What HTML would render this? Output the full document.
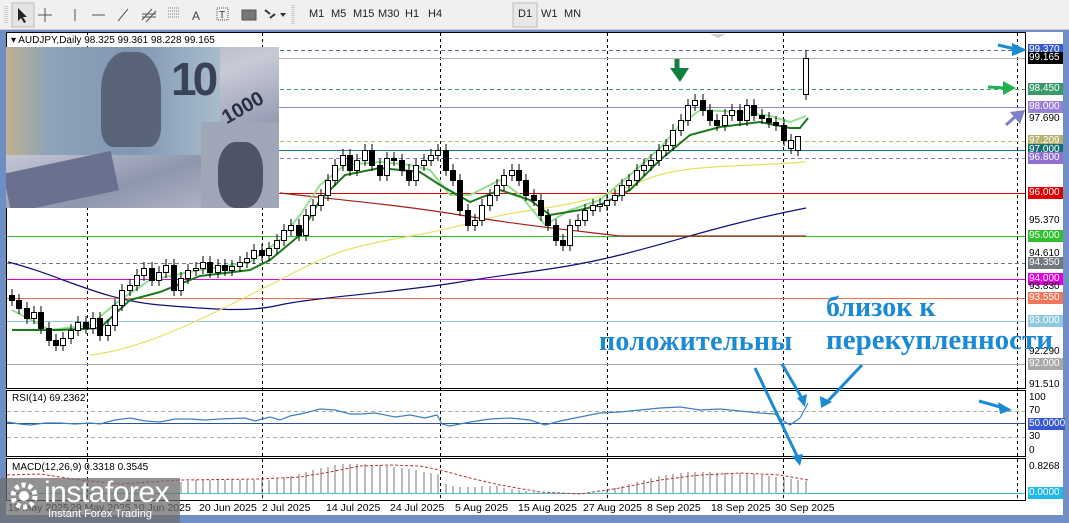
<!DOCTYPE html>
<html><head><meta charset="utf-8"><style>
*{margin:0;padding:0;box-sizing:border-box}
body{width:1069px;height:523px;overflow:hidden;background:#6f8fc4;font-family:"Liberation Sans",sans-serif;position:relative}
.tb{position:absolute;left:0;top:0;width:1069px;height:30px;background:#f0f0f0;border-bottom:1px solid #c8c8c8}
.tb span{position:absolute;top:8px;font-size:11px;color:#222}
.lbl{position:absolute;left:1028px;width:35px;height:12px;font-size:10px;line-height:12px;color:#fff;padding-left:1px}
.ax{position:absolute;left:1029px;font-size:10px;color:#000;line-height:12px}
.dt{position:absolute;top:502px;font-size:10.5px;color:#000}
.ru{position:absolute;font-family:"Liberation Serif",serif;font-weight:bold;color:#1a8ad4;font-size:28px;white-space:nowrap}
</style></head><body>
<div class="tb">
<svg width="600" height="30" style="position:absolute;left:0;top:0">
<path d="M5 6V24M7 6V24" stroke="#aaa" stroke-dasharray="1 1"/>
<rect x="12" y="3" width="22" height="24" fill="#e4e4e4" stroke="#bbb"/>
<path d="M18 8L18 21L21 18L24 23L26 22L23 17L27 17Z" fill="#222"/>
<path d="M45 8V22M38 15H52" stroke="#555"/>
<path d="M75 9V21" stroke="#555"/>
<path d="M92 15H105" stroke="#555"/>
<path d="M118 21L128 9" stroke="#555"/>
<path d="M142 20L152 9M146 22L156 11M142 14H156M142 17H156" stroke="#555"/>
<path d="M168 8H180M168 11H180M168 14H180M168 17H180" stroke="#777" stroke-dasharray="1 1"/>
<text x="192" y="20" font-size="12" fill="#444">A</text>
<rect x="217" y="8" width="11" height="12" fill="none" stroke="#555" stroke-dasharray="1 1"/><text x="219" y="18" font-size="10" fill="#333">T</text>
<rect x="242" y="10" width="14" height="10" fill="#777" stroke="#555"/>
<path d="M265 10L270 14M270 18L275 14" stroke="#333" stroke-width="2"/><path d="M280 13L286 13L283 17Z" fill="#333"/>
<path d="M292 5V25M294 5V25" stroke="#aaa" stroke-dasharray="1 1"/>
<rect x="513" y="3" width="24" height="24" fill="#e8e8e8" stroke="#bbb"/>
</svg>
<span style="left:309px">M1</span><span style="left:331px">M5</span><span style="left:353px">M15</span><span style="left:378px">M30</span><span style="left:405px">H1</span><span style="left:428px">H4</span><span style="left:518px">D1</span><span style="left:541px">W1</span><span style="left:564px">MN</span>
</div>
<div style="position:absolute;left:6px;top:32px;width:1057px;height:483px;background:#fff"></div>
<svg width="1069" height="523" style="position:absolute;left:0;top:0">
<rect x="6.5" y="32.5" width="1019" height="356" fill="none" stroke="#000"/>
<rect x="6.5" y="390.5" width="1019" height="66" fill="none" stroke="#000"/>
<rect x="6.5" y="458.5" width="1019" height="42" fill="none" stroke="#000"/>
<g stroke="#000" stroke-dasharray="3 3">
<path d="M87.5 33V500M262.5 33V500M440.5 33V500M607.5 33V500M783.5 33V500M1017.5 33V500"/>
</g>
<g stroke-width="1">
<path d="M7 50.5H1025" stroke="#5a6a90" stroke-dasharray="4 3"/>
<path d="M7 58.5H1025" stroke="#b8b0a8"/>
<path d="M7 89.5H1025" stroke="#3a9a6a" stroke-dasharray="4 3"/>
<path d="M7 107.5H1025" stroke="#9a80d0"/>
<path d="M7 141.5H1025" stroke="#c0b870" stroke-dasharray="4 3"/>
<path d="M7 150.5H1025" stroke="#1a7878"/>
<path d="M7 158.5H1025" stroke="#9070d0" stroke-dasharray="4 3"/>
<path d="M7 193.5H1025" stroke="#e00000"/>
<path d="M7 236.5H1025" stroke="#30c030"/>
<path d="M7 263.5H1025" stroke="#707880" stroke-dasharray="4 3"/>
<path d="M7 279.5H1025" stroke="#e000e0"/>
<path d="M7 298.5H1025" stroke="#f07050"/>
<path d="M7 321.5H1025" stroke="#90c8e0"/>
<path d="M7 364.5H1025" stroke="#a8a8a8"/>
</g>
<path d="M8 262C60 275 100 300 160 305S250 312 280 305S400 292 460 282S560 270 620 255S720 225 806 208" fill="none" stroke="#10107a" stroke-width="1.2"/>
<path d="M90 355C140 350 200 320 260 290S330 250 400 238S480 218 520 212S600 200 640 182S720 168 806 162" fill="none" stroke="#e8e060" stroke-width="1.2"/>
<path d="M280 193C340 200 400 205 460 215S570 230 620 236H806" fill="none" stroke="#a02020" stroke-width="1.2"/>
<path d="M12 310L50 330L90 325L120 300L150 280L200 270L250 262L280 240L300 215L320 185L345 165L380 162L410 165L430 170L450 195L470 195L500 180L520 195L545 225L570 210L600 200L630 175L660 148L680 125L700 110L740 112L770 116L790 122L806 116" fill="none" stroke="#90e090" stroke-width="2"/>
<path d="M12 330L60 330L100 328L130 300L160 292L200 276L250 270L270 260L300 235L320 200L345 175L380 168L420 172L440 185L470 202L500 190L530 200L550 215L580 210L600 205L630 190L660 160L690 135L720 127L760 122L790 128L800 128L808 118" fill="none" stroke="#1a7a1a" stroke-width="2"/>
<path stroke="#000" d="M12 289V306M19 294V314M27 302V324M34 306V324M41 306V334M49 322V346M56 334V351M63 332V351M71 324V344M78 316V336M86 316V334M93 312V334M100 312V341M108 319V341M115 299V331M122 284V311M130 279V296M137 269V291M144 262V281M152 262V286M159 266V286M166 259V278M174 259V296M181 272V296M188 264V284M196 262V276M203 256V274M210 256V278M218 259V278M225 259V276M232 260V276M240 256V272M247 252V268M254 244V264M262 244V261M269 242V261M277 234V254M284 224V246M291 219V236M299 219V241M306 209V241M313 199V221M321 189V211M328 174V201M335 159V186M343 149V171M350 149V176M357 154V176M365 144V166M372 144V171M380 159V181M387 152V181M394 152V166M402 154V176M409 164V186M416 159V186M424 154V171M431 149V166M438 144V161M446 144V176M453 164V186M460 174V216M468 204V231M475 214V231M482 199V226M490 189V211M497 179V201M504 169V191M512 164V181M519 164V186M526 174V201M534 189V206M541 194V221M548 209V231M556 219V246M563 234V251M570 219V251M578 214V231M585 204V226M593 199V216M600 198V212M607 194V211M615 189V206M622 179V201M629 174V191M637 164V186M644 159V176M651 154V171M659 144V166M666 139V156M673 124V151M681 114V136M688 99V126M695 94V111M703 94V116M710 104V126M717 114V131M725 109V131M732 104V121M740 104V126M747 99V126M754 99V121M762 109V124M769 112V128M776 116V131M784 119V146M791 134V154M798 139V156M806 50V100"/>
<g stroke="#000" stroke-width="1">
<rect x="9.5" y="295.5" width="5" height="5"/><rect x="16.5" y="300.5" width="5" height="8"/><rect x="24.5" y="308.5" width="5" height="10"/><rect x="31.5" y="312.5" width="5" height="6" fill="#fff"/><rect x="38.5" y="312.5" width="5" height="16"/><rect x="46.5" y="328.5" width="5" height="12"/><rect x="53.5" y="340.5" width="5" height="5"/><rect x="60.5" y="338.5" width="5" height="7" fill="#fff"/><rect x="68.5" y="330.5" width="5" height="8" fill="#fff"/><rect x="75.5" y="322.5" width="5" height="8" fill="#fff"/>
<rect x="83.5" y="322.5" width="5" height="6"/><rect x="90.5" y="318.5" width="5" height="10" fill="#fff"/><rect x="97.5" y="318.5" width="5" height="17"/><rect x="105.5" y="325.5" width="5" height="10" fill="#fff"/><rect x="112.5" y="305.5" width="5" height="20" fill="#fff"/><rect x="119.5" y="290.5" width="5" height="15" fill="#fff"/><rect x="127.5" y="285.5" width="5" height="5" fill="#fff"/><rect x="134.5" y="275.5" width="5" height="10" fill="#fff"/><rect x="141.5" y="268.5" width="5" height="7" fill="#fff"/><rect x="149.5" y="268.5" width="5" height="12"/>
<rect x="156.5" y="272.5" width="5" height="8" fill="#fff"/><rect x="163.5" y="265.5" width="5" height="7" fill="#fff"/><rect x="171.5" y="265.5" width="5" height="25"/><rect x="178.5" y="278.5" width="5" height="12" fill="#fff"/><rect x="185.5" y="270.5" width="5" height="8" fill="#fff"/><rect x="193.5" y="268.5" width="5" height="2" fill="#fff"/><rect x="200.5" y="262.5" width="5" height="6" fill="#fff"/><rect x="207.5" y="262.5" width="5" height="10"/><rect x="215.5" y="265.5" width="5" height="7" fill="#fff"/><rect x="222.5" y="265.5" width="5" height="5"/>
<rect x="229.5" y="266.5" width="5" height="4" fill="#fff"/><rect x="237.5" y="262.5" width="5" height="4" fill="#fff"/><rect x="244.5" y="258.5" width="5" height="4" fill="#fff"/><rect x="251.5" y="250.5" width="5" height="8" fill="#fff"/><rect x="259.5" y="250.5" width="5" height="5"/><rect x="266.5" y="248.5" width="5" height="7" fill="#fff"/><rect x="274.5" y="240.5" width="5" height="8" fill="#fff"/><rect x="281.5" y="230.5" width="5" height="10" fill="#fff"/><rect x="288.5" y="225.5" width="5" height="5" fill="#fff"/><rect x="296.5" y="225.5" width="5" height="10"/>
<rect x="303.5" y="215.5" width="5" height="20" fill="#fff"/><rect x="310.5" y="205.5" width="5" height="10" fill="#fff"/><rect x="318.5" y="195.5" width="5" height="10" fill="#fff"/><rect x="325.5" y="180.5" width="5" height="15" fill="#fff"/><rect x="332.5" y="165.5" width="5" height="15" fill="#fff"/><rect x="340.5" y="155.5" width="5" height="10" fill="#fff"/><rect x="347.5" y="155.5" width="5" height="15"/><rect x="354.5" y="160.5" width="5" height="10" fill="#fff"/><rect x="362.5" y="150.5" width="5" height="10" fill="#fff"/><rect x="369.5" y="150.5" width="5" height="15"/>
<rect x="377.5" y="165.5" width="5" height="10"/><rect x="384.5" y="158.5" width="5" height="17" fill="#fff"/><rect x="391.5" y="158.5" width="5" height="2"/><rect x="399.5" y="160.5" width="5" height="10"/><rect x="406.5" y="170.5" width="5" height="10"/><rect x="413.5" y="165.5" width="5" height="15" fill="#fff"/><rect x="421.5" y="160.5" width="5" height="5" fill="#fff"/><rect x="428.5" y="155.5" width="5" height="5" fill="#fff"/><rect x="435.5" y="150.5" width="5" height="5" fill="#fff"/><rect x="443.5" y="150.5" width="5" height="20"/>
<rect x="450.5" y="170.5" width="5" height="10"/><rect x="457.5" y="180.5" width="5" height="30"/><rect x="465.5" y="210.5" width="5" height="15"/><rect x="472.5" y="220.5" width="5" height="5" fill="#fff"/><rect x="479.5" y="205.5" width="5" height="15" fill="#fff"/><rect x="487.5" y="195.5" width="5" height="10" fill="#fff"/><rect x="494.5" y="185.5" width="5" height="10" fill="#fff"/><rect x="501.5" y="175.5" width="5" height="10" fill="#fff"/><rect x="509.5" y="170.5" width="5" height="5" fill="#fff"/><rect x="516.5" y="170.5" width="5" height="10"/>
<rect x="523.5" y="180.5" width="5" height="15"/><rect x="531.5" y="195.5" width="5" height="5"/><rect x="538.5" y="200.5" width="5" height="15"/><rect x="545.5" y="215.5" width="5" height="10"/><rect x="553.5" y="225.5" width="5" height="15"/><rect x="560.5" y="240.5" width="5" height="5"/><rect x="567.5" y="225.5" width="5" height="20" fill="#fff"/><rect x="575.5" y="220.5" width="5" height="5" fill="#fff"/><rect x="582.5" y="210.5" width="5" height="10" fill="#fff"/><rect x="590.5" y="205.5" width="5" height="5" fill="#fff"/>
<rect x="597.5" y="204.5" width="5" height="2" fill="#fff"/><rect x="604.5" y="200.5" width="5" height="5" fill="#fff"/><rect x="612.5" y="195.5" width="5" height="5" fill="#fff"/><rect x="619.5" y="185.5" width="5" height="10" fill="#fff"/><rect x="626.5" y="180.5" width="5" height="5" fill="#fff"/><rect x="634.5" y="170.5" width="5" height="10" fill="#fff"/><rect x="641.5" y="165.5" width="5" height="5" fill="#fff"/><rect x="648.5" y="160.5" width="5" height="5" fill="#fff"/><rect x="656.5" y="150.5" width="5" height="10" fill="#fff"/><rect x="663.5" y="145.5" width="5" height="5" fill="#fff"/>
<rect x="670.5" y="130.5" width="5" height="15" fill="#fff"/><rect x="678.5" y="120.5" width="5" height="10" fill="#fff"/><rect x="685.5" y="105.5" width="5" height="15" fill="#fff"/><rect x="692.5" y="100.5" width="5" height="5" fill="#fff"/><rect x="700.5" y="100.5" width="5" height="10"/><rect x="707.5" y="110.5" width="5" height="10"/><rect x="714.5" y="120.5" width="5" height="5"/><rect x="722.5" y="115.5" width="5" height="10" fill="#fff"/><rect x="729.5" y="110.5" width="5" height="5" fill="#fff"/><rect x="737.5" y="110.5" width="5" height="10"/>
<rect x="744.5" y="105.5" width="5" height="15" fill="#fff"/><rect x="751.5" y="105.5" width="5" height="10"/><rect x="759.5" y="115.5" width="5" height="3"/><rect x="766.5" y="118.5" width="5" height="4"/><rect x="773.5" y="122.5" width="5" height="3"/><rect x="781.5" y="125.5" width="5" height="15"/><rect x="788.5" y="140.5" width="5" height="8" fill="#fff"/><rect x="795.5" y="136.5" width="5" height="14" fill="#fff"/><rect x="803.5" y="58.5" width="5" height="36" fill="#fff"/>
</g>
<path d="M710 34L718 38L726 34Z" fill="#ccc"/>
<path d="M7 411.5H1025M7 437.5H1025" stroke="#aaa" stroke-dasharray="4 3"/>
<path d="M7 423.5H1025" stroke="#3050a0"/>
<path d="M7 422L20 424L30 425L45 423L60 423L75 424L90 423L100 424L115 420L130 418L145 421L160 422L175 419L190 419L205 420L220 419L245 418L255 421L270 417L280 420L290 416L305 413L320 409L335 410L350 414L360 414L375 413L395 417L410 415L425 418L437 415L442 424L450 426L470 422L490 419L510 418L530 420L545 425L560 421L580 417L600 413L620 412L640 410L660 408L680 407L700 410L720 409L740 411L760 413L775 414L782 420L790 425L800 418L808 403" fill="none" stroke="#3a80c0" stroke-width="1.2"/>
<path d="M7 493.5H1025" stroke="#40c0d0"/>
<g stroke="#777">
<path d="M181 493V482M188 493V481M196 493V480M203 493V480M210 493V480M218 493V480M225 493V480M232 493V480M240 493V480M247 493V480M254 493V480M262 493V480M269 493V480M277 493V479M284 493V478M291 493V476M299 493V474M306 493V472M313 493V470M321 493V468M328 493V467M335 493V465M343 493V464M350 493V464M357 493V464M365 493V464M372 493V465M380 493V465M387 493V466M394 493V467M402 493V468M409 493V469M416 493V470M424 493V472M431 493V473M438 493V474M446 493V484M453 493V486M460 493V487M468 493V487M475 493V487M482 493V486M490 493V486M497 493V486M504 493V488M512 493V489M519 493V490M526 493V491M534 493V492M607 493V490M615 493V488M622 493V486M629 493V484M637 493V482M644 493V480M651 493V478M659 493V476M666 493V475M673 493V474M681 493V473M688 493V472M695 493V472M703 493V472M710 493V472M717 493V473M725 493V473M732 493V473M740 493V473M747 493V474M754 493V474M762 493V475M769 493V476M776 493V477M784 493V478M791 493V479M798 493V480M806 493V481"/>
</g>
<path d="M7 475L40 474L80 480L120 484L180 480L260 479L300 477L330 472L360 466L390 465L420 466L440 470L470 478L500 485L540 492L580 494L620 488L660 480L700 475L740 473L780 475L808 480" fill="none" stroke="#c03030" stroke-dasharray="3 2"/>
<g fill="#1a8ad4" stroke="#1a8ad4" stroke-width="3">
<path d="M755 368L798 458" /><path d="M782 364L803 400"/><path d="M862 365L826 403"/><path d="M998 45L1015 49"/><path d="M979 401L1000 407"/>
</g>
<path d="M792 456L800 466L803 454Z M797 398L805 407L807 394Z M820 396L821 408L832 402Z M1012 43L1027 50L1012 56Z M998 402L1012 410L1000 414Z" fill="#1a8ad4"/>
<path d="M988 87L1005 88" stroke="#20b050" stroke-width="3"/><path d="M1003 81L1016 88L1003 95Z" fill="#20b050"/>
<path d="M1006 125L1016 116" stroke="#8080c8" stroke-width="3"/><path d="M1010 112L1025 110L1020 124Z" fill="#8080c8"/>
<path d="M677 59V70" stroke="#108040" stroke-width="5"/><path d="M670 68L680 82L689 68Z" fill="#108040"/>
</svg>
<div style="position:absolute;left:6px;top:47px;width:273px;height:161px;background:linear-gradient(160deg,#9aa0b4 0%,#c8cad6 40%,#8e96ae 70%,#c0c4d0 100%);overflow:hidden">
<div style="position:absolute;left:0;top:0;width:214px;height:108px;background:linear-gradient(90deg,#c0b090 0%,#8ea4b8 20%,#8296b4 60%,#a8bccc 100%)"></div>
<div style="position:absolute;left:95px;top:5px;width:60px;height:95px;background:#5a6478;border-radius:40% 40% 20% 20%"></div>
<div style="position:absolute;left:165px;top:5px;font:bold 46px 'Liberation Sans',sans-serif;color:#3a4258;letter-spacing:-4px">10</div>
<div style="position:absolute;left:195px;top:75px;width:78px;height:86px;background:#9ea6b8"></div>
<div style="position:absolute;left:212px;top:95px;width:45px;height:66px;background:#4e5466;border-radius:40%"></div>
<div style="position:absolute;left:215px;top:50px;font:bold 20px 'Liberation Sans',sans-serif;color:#2a3040;transform:rotate(-30deg)">1000</div>
<div style="position:absolute;left:0;top:115px;width:110px;height:40px;background:#6a7090;transform:rotate(-12deg)"></div>
</div>
<div style="position:absolute;left:9px;top:35px;font-size:10px;color:#000;background:#fff;padding:0 2px">▾ AUDJPY,Daily 98.325 99.361 98.228 99.165</div>
<div class="lbl" style="top:44px;background:#3a5ad0">99.370</div>
<div class="lbl" style="top:52px;background:#000">99.165</div>
<div class="lbl" style="top:83px;background:#3a9a6a">98.450</div>
<div class="lbl" style="top:101px;background:#9a80d8">98.000</div>
<div class="ax" style="top:113px">97.690</div>
<div class="lbl" style="top:135px;background:#b8b070">97.209</div>
<div class="lbl" style="top:144px;background:#187070">97.000</div>
<div class="lbl" style="top:152px;background:#9070d0">96.800</div>
<div class="lbl" style="top:187px;background:#e00000">96.000</div>
<div class="ax" style="top:215px">95.370</div>
<div class="lbl" style="top:230px;background:#30c030">95.000</div>
<div class="ax" style="top:248px">94.610</div>
<div class="lbl" style="top:257px;background:#707880">94.350</div>
<div class="lbl" style="top:273px;background:#e000e0">94.000</div>
<div class="ax" style="top:281px">93.830</div>
<div class="lbl" style="top:292px;background:#f07858">93.550</div>
<div class="lbl" style="top:315px;background:#90c8e0">93.000</div>
<div class="ax" style="top:346px">92.290</div>
<div class="lbl" style="top:358px;background:#a8a8a8">92.000</div>
<div class="ax" style="top:379px">91.510</div>
<div class="ax" style="top:392px">100</div>
<div class="ax" style="top:405px">70</div>
<div class="lbl" style="top:418px;background:#3a5ad0;width:37px">50.0000</div>
<div class="ax" style="top:431px">30</div>
<div class="ax" style="top:445px">0</div>
<div class="ax" style="top:461px">0.8268</div>
<div class="lbl" style="top:487px;background:#20b8e8">0.0000</div>
<div style="position:absolute;left:12px;top:393px;font-size:10px">RSI(14) 69.2362</div>
<div style="position:absolute;left:12px;top:462px;font-size:10px">MACD(12,26,9) 0.3318 0.3545</div>
<div class="dt" style="left:8px">19 May 2025</div><div class="dt" style="left:70px">29 May 2025</div><div class="dt" style="left:133px">10 Jun 2025</div><div class="dt" style="left:199px">20 Jun 2025</div><div class="dt" style="left:262px">2 Jul 2025</div><div class="dt" style="left:326px">14 Jul 2025</div><div class="dt" style="left:390px">24 Jul 2025</div><div class="dt" style="left:455px">5 Aug 2025</div><div class="dt" style="left:518px">15 Aug 2025</div><div class="dt" style="left:583px">27 Aug 2025</div><div class="dt" style="left:647px">8 Sep 2025</div><div class="dt" style="left:711px">18 Sep 2025</div><div class="dt" style="left:775px">30 Sep 2025</div>
<div style="position:absolute;left:0;top:478px;width:180px;height:45px;background:rgba(110,110,110,.75)"></div>
<svg width="40" height="40" style="position:absolute;left:6px;top:480px"><circle cx="18" cy="16" r="11" fill="none" stroke="#fff" stroke-width="5" stroke-dasharray="4 3"/><circle cx="18" cy="16" r="5" fill="#fff"/></svg>
<div style="position:absolute;left:44px;top:476px;font-size:30px;color:#fff;letter-spacing:-0.5px">instaforex</div>
<div style="position:absolute;left:48px;top:508px;font-size:11px;color:#fff">Instant Forex Trading</div>
<div class="ru" style="left:599px;top:326px;letter-spacing:0.3px">положительны</div>
<div class="ru" style="left:826px;top:292px">близок к</div>
<div class="ru" style="left:826px;top:324px;font-size:29px">перекупленности</div>
</body></html>
